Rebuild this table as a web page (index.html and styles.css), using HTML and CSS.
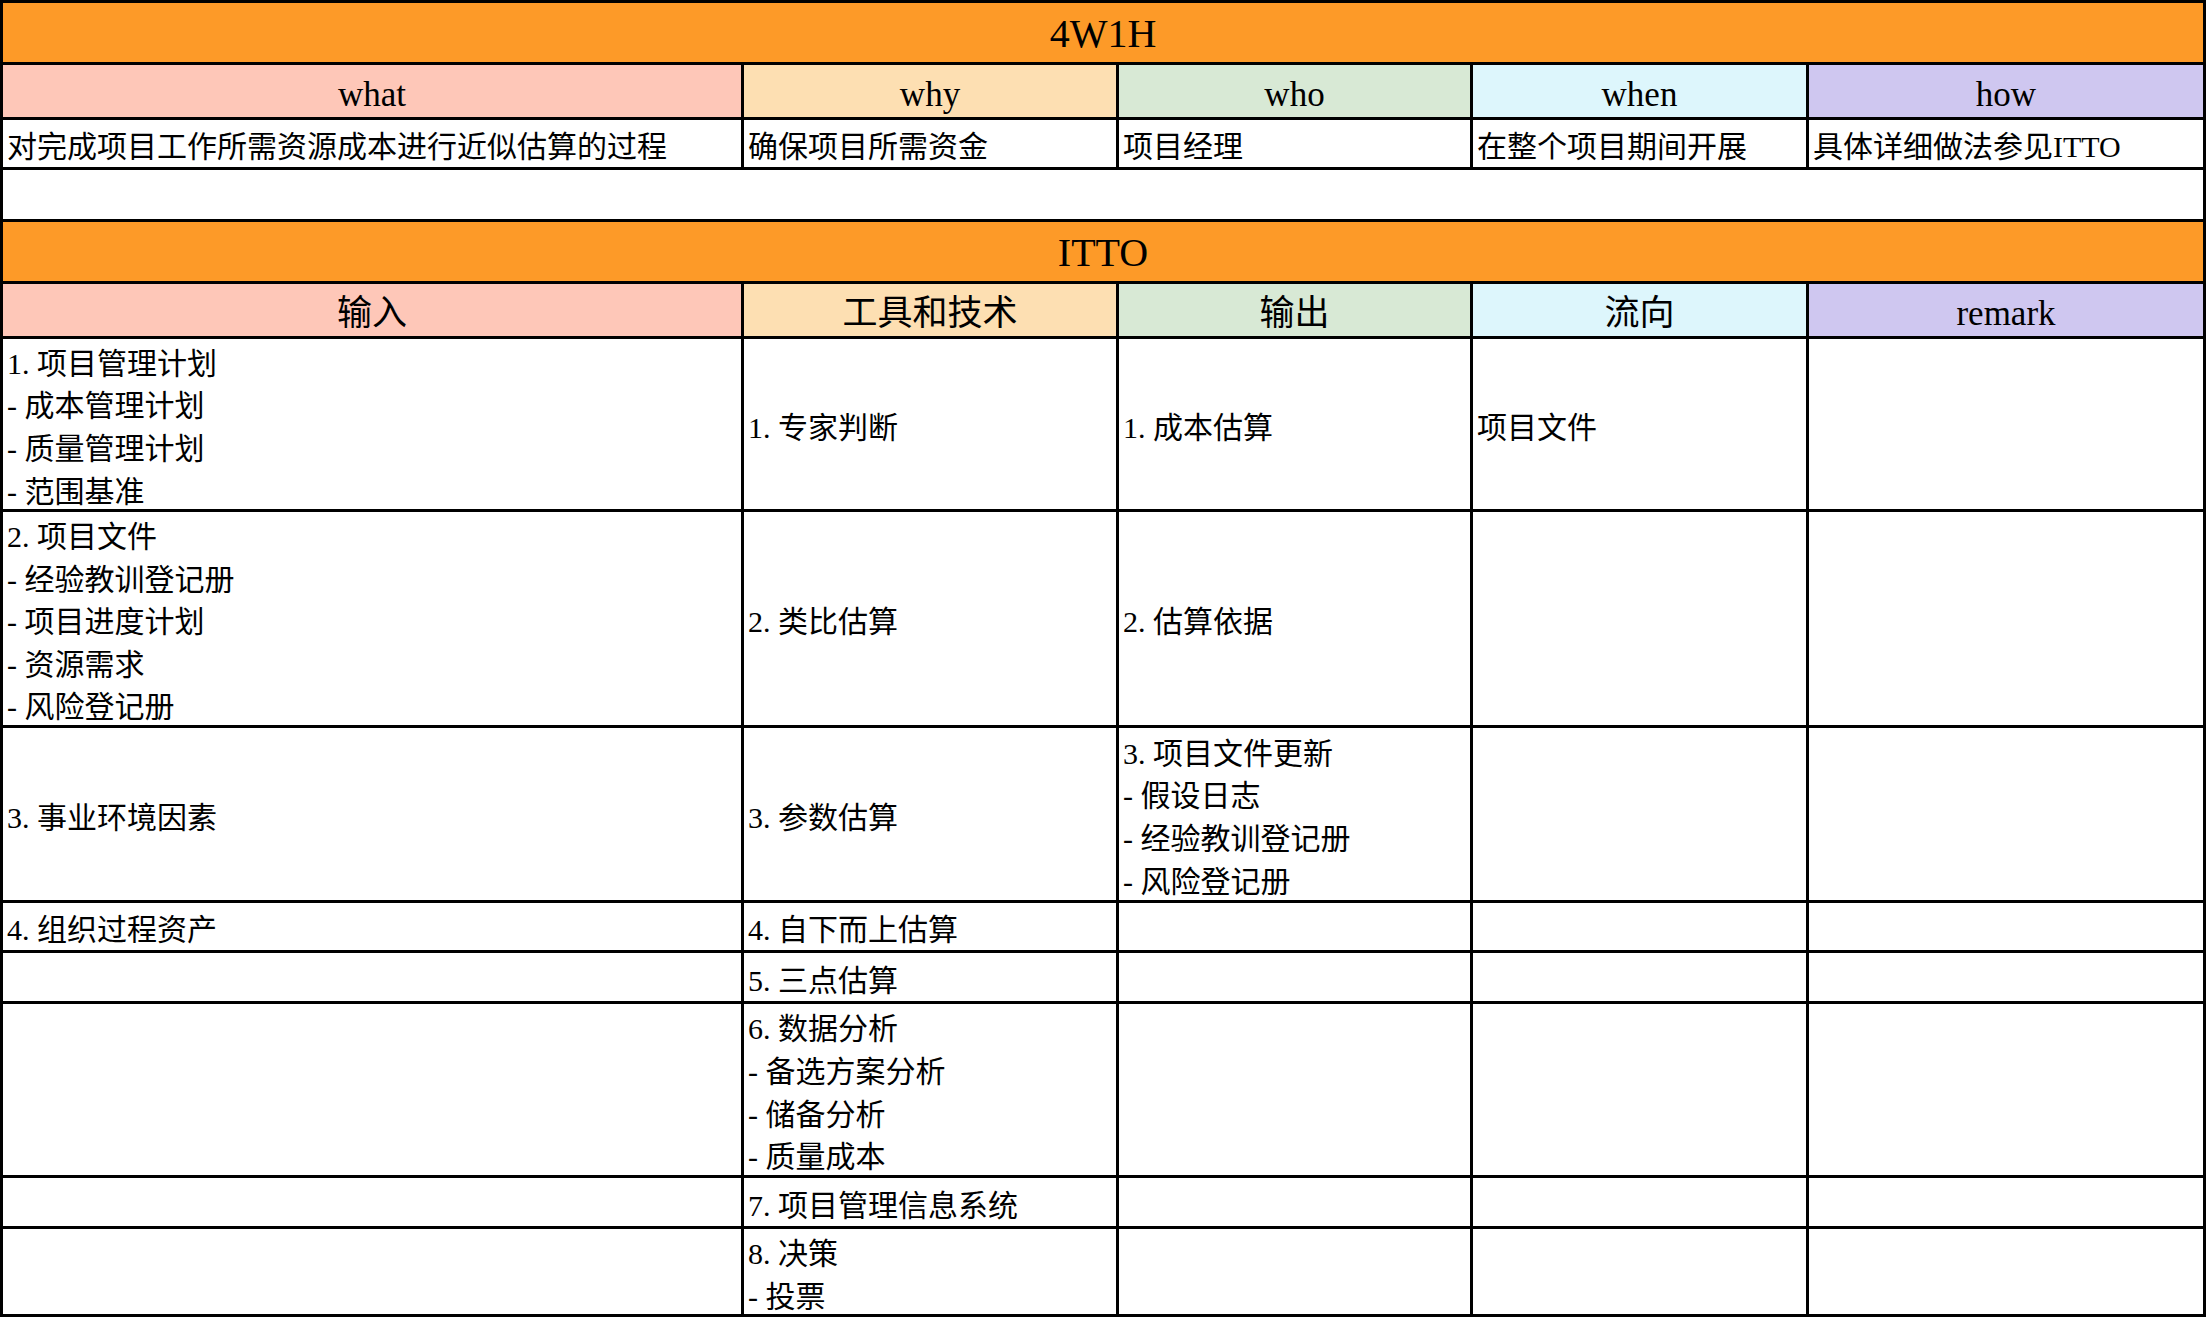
FILE: index.html
```html
<!DOCTYPE html>
<html lang="zh-CN">
<head>
<meta charset="utf-8">
<title>4W1H / ITTO</title>
<link rel="stylesheet" href="styles.css">
</head>
<body>
<div class="sheet">
  <div class="cell title span5">4W1H</div>

  <div class="cell head c-what">what</div>
  <div class="cell head c-why">why</div>
  <div class="cell head c-who">who</div>
  <div class="cell head c-when">when</div>
  <div class="cell head c-how">how</div>

  <div class="cell body"><span>对完成项目工作所需资源成本进行近似估算的过程</span></div>
  <div class="cell body"><span>确保项目所需资金</span></div>
  <div class="cell body"><span>项目经理</span></div>
  <div class="cell body"><span>在整个项目期间开展</span></div>
  <div class="cell body"><span>具体详细做法参见ITTO</span></div>

  <div class="cell span5"></div>

  <div class="cell title span5">ITTO</div>

  <div class="cell head c-what">输入</div>
  <div class="cell head c-why">工具和技术</div>
  <div class="cell head c-who">输出</div>
  <div class="cell head c-when">流向</div>
  <div class="cell head c-how">remark</div>

  <div class="cell body"><span>1. 项目管理计划</span><span>- 成本管理计划</span><span>- 质量管理计划</span><span>- 范围基准</span></div>
  <div class="cell body"><span>1. 专家判断</span></div>
  <div class="cell body"><span>1. 成本估算</span></div>
  <div class="cell body"><span>项目文件</span></div>
  <div class="cell body"></div>

  <div class="cell body"><span>2. 项目文件</span><span>- 经验教训登记册</span><span>- 项目进度计划</span><span>- 资源需求</span><span>- 风险登记册</span></div>
  <div class="cell body"><span>2. 类比估算</span></div>
  <div class="cell body"><span>2. 估算依据</span></div>
  <div class="cell body"></div>
  <div class="cell body"></div>

  <div class="cell body"><span>3. 事业环境因素</span></div>
  <div class="cell body"><span>3. 参数估算</span></div>
  <div class="cell body"><span>3. 项目文件更新</span><span>- 假设日志</span><span>- 经验教训登记册</span><span>- 风险登记册</span></div>
  <div class="cell body"></div>
  <div class="cell body"></div>

  <div class="cell body"><span>4. 组织过程资产</span></div>
  <div class="cell body"><span>4. 自下而上估算</span></div>
  <div class="cell body"></div>
  <div class="cell body"></div>
  <div class="cell body"></div>

  <div class="cell body"></div>
  <div class="cell body"><span>5. 三点估算</span></div>
  <div class="cell body"></div>
  <div class="cell body"></div>
  <div class="cell body"></div>

  <div class="cell body"></div>
  <div class="cell body"><span>6. 数据分析</span><span>- 备选方案分析</span><span>- 储备分析</span><span>- 质量成本</span></div>
  <div class="cell body"></div>
  <div class="cell body"></div>
  <div class="cell body"></div>

  <div class="cell body"></div>
  <div class="cell body"><span>7. 项目管理信息系统</span></div>
  <div class="cell body"></div>
  <div class="cell body"></div>
  <div class="cell body"></div>

  <div class="cell body"></div>
  <div class="cell body"><span>8. 决策</span><span>- 投票</span></div>
  <div class="cell body"></div>
  <div class="cell body"></div>
  <div class="cell body"></div>
</div>
</body>
</html>
```

FILE: styles.css
```css
html, body {
  margin: 0;
  padding: 0;
  background: #ffffff;
}

body {
  font-family: "Liberation Serif", "Noto Sans CJK SC", serif;
  color: #000;
}

.sheet {
  display: grid;
  grid-template-columns: 738px 372px 351px 333px 394px;
  grid-template-rows: 59px 52px 47px 49px 59px 52px 170px 213px 172px 47px 48px 171px 48px 85px;
  gap: 3px;
  padding: 3px;
  background: #000;
  width: 2206px;
  box-sizing: border-box;
}

.cell {
  background: #fff;
  display: flex;
  flex-direction: column;
  justify-content: center;
  overflow: hidden;
  min-width: 0;
}

.span5 {
  grid-column: 1 / span 5;
}

.title {
  background: #fd9a28;
  align-items: center;
  font-size: 40px;
  line-height: 1;
  padding-top: 3px;
}

.head {
  align-items: center;
  font-size: 35px;
  line-height: 1;
  padding-top: 6px;
}

.c-what { background: #fec7b8; }
.c-why  { background: #fddfb2; }
.c-who  { background: #d8e9d5; }
.c-when { background: #ddf6fc; }
.c-how  { background: #cfc7f0; }

.body {
  font-size: 30px;
  padding-left: 4px;
  white-space: nowrap;
}

.body span {
  display: block;
  line-height: 34.6px;
  padding-top: 8px;
}
```
